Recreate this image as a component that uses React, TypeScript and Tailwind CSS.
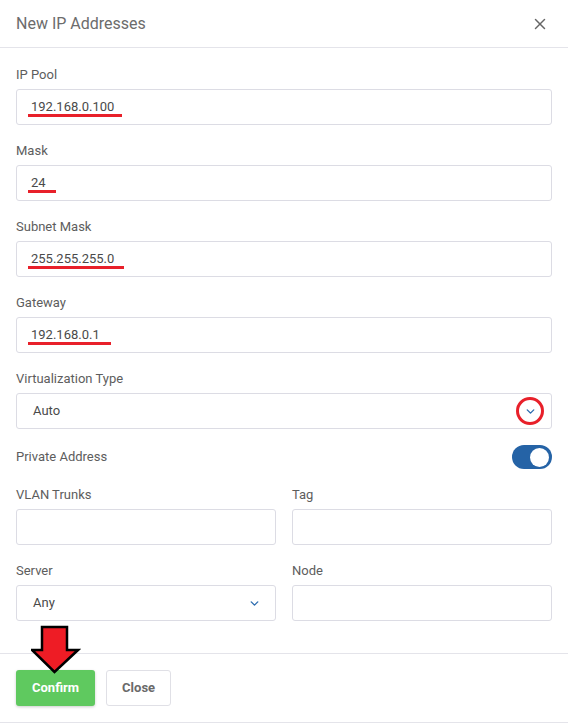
import { ChevronDown, X } from 'lucide-react';

const font = { fontFamily: 'Roboto, "Noto Sans", sans-serif' };

function Marked({ value, lineWidth }: { value: string; lineWidth: number }) {
  // red underline marking the value, as in the annotated screenshot
  return (
    <span className="relative inline-block">
      {value}
      <span
        className="absolute left-[-3px] top-[17px] h-[3px] bg-[#e8202a]"
        style={{ width: lineWidth }}
      />
    </span>
  );
}

function Label({ children }: { children: React.ReactNode }) {
  return <label className="text-[13px] leading-[18px] text-[#5d5d5d] mt-[1px] mb-[5px]">{children}</label>;
}

function Field({
  label,
  children,
}: {
  label: string;
  children?: React.ReactNode;
}) {
  return (
    <div className="flex flex-col">
      <Label>{label}</Label>
      <div className="h-[36px] border border-[#dcdce4] rounded-[3px] bg-white flex items-center pl-[14px] pr-[14px] text-[13px] text-[#4a4a4a]">
        {children}
      </div>
    </div>
  );
}

function SelectBox({ value, circled }: { value: string; circled?: boolean }) {
  return (
    <div className="h-[36px] border border-[#dcdce4] rounded-[3px] bg-white flex items-center justify-between pl-[14px] pr-[13px] text-[13px] text-[#4a4a4a]">
      <span className="pl-[2px]">{value}</span>
      <span className="relative flex items-center justify-center w-[16px] h-[16px]">
        <ChevronDown className="w-[13px] h-[13px] text-[#2e6db0]" strokeWidth={2.6} />
        {circled && (
          <span className="absolute left-[-6px] top-[-6px] w-[28px] h-[28px] rounded-full border-[3px] border-[#e8202a]" />
        )}
      </span>
    </div>
  );
}

export default function App() {
  return (
    <div className="w-[568px] min-h-[723px] bg-white flex flex-col" style={font}>
      <div className="h-[48px] shrink-0 border-b border-[#e4e4ea] flex items-center justify-between pl-[16px] pr-[19px]">
        <h2 className="text-[16px] text-[#6c6c6c]">New IP Addresses</h2>
        <X className="w-[18px] h-[18px] text-[#666]" strokeWidth={2} />
      </div>

      <div className="flex flex-col gap-[16px] px-[16px] pt-[17px] pb-[32px]">
        <Field label="IP Pool">
          <Marked value="192.168.0.100" lineWidth={94} />
        </Field>
        <Field label="Mask">
          <Marked value="24" lineWidth={28} />
        </Field>
        <Field label="Subnet Mask">
          <Marked value="255.255.255.0" lineWidth={96} />
        </Field>
        <Field label="Gateway">
          <Marked value="192.168.0.1" lineWidth={83} />
        </Field>
        <div className="flex flex-col">
          <Label>Virtualization Type</Label>
          <SelectBox value="Auto" circled />
        </div>

        <div className="flex items-center justify-between h-[24px]">
          <span className="text-[13px] text-[#5d5d5d]">Private Address</span>
          <span className="w-[40px] h-[24px] rounded-full bg-[#2563a6] flex items-center justify-end pr-[3px]">
            <span className="w-[19px] h-[19px] rounded-full bg-white" />
          </span>
        </div>

        <div className="grid grid-cols-2 gap-x-[16px] gap-y-[16px]">
          <Field label="VLAN Trunks" />
          <Field label="Tag" />
          <div className="flex flex-col">
            <Label>Server</Label>
            <SelectBox value="Any" />
          </div>
          <Field label="Node" />
        </div>
      </div>

      <div className="relative shrink-0 border-t border-b border-[#e4e4ea] flex items-center gap-[11px] px-[16px] pt-[16px] pb-[16px]">
        <button className="relative h-[36px] px-[16px] rounded-[3px] bg-[#5fc95f] text-white text-[13px] font-bold shadow-[0_1px_3px_rgba(0,0,0,0.2)]">
          Confirm
        </button>
        <button className="h-[36px] px-[15px] rounded-[3px] bg-white border border-[#e0e0e6] text-[#6a6a6a] text-[13px] font-bold">
          Close
        </button>
        <svg
          className="absolute left-[31px] top-[-29px]"
          width="50"
          height="50"
          viewBox="0 0 50 50"
        >
          <path
            d="M11 2 H36 V25 H47 L23.5 47 L1 25 H11 Z"
            fill="#ee1c25"
            stroke="#000"
            strokeWidth="2.5"
            strokeLinejoin="miter"
          />
        </svg>
      </div>
    </div>
  );
}
